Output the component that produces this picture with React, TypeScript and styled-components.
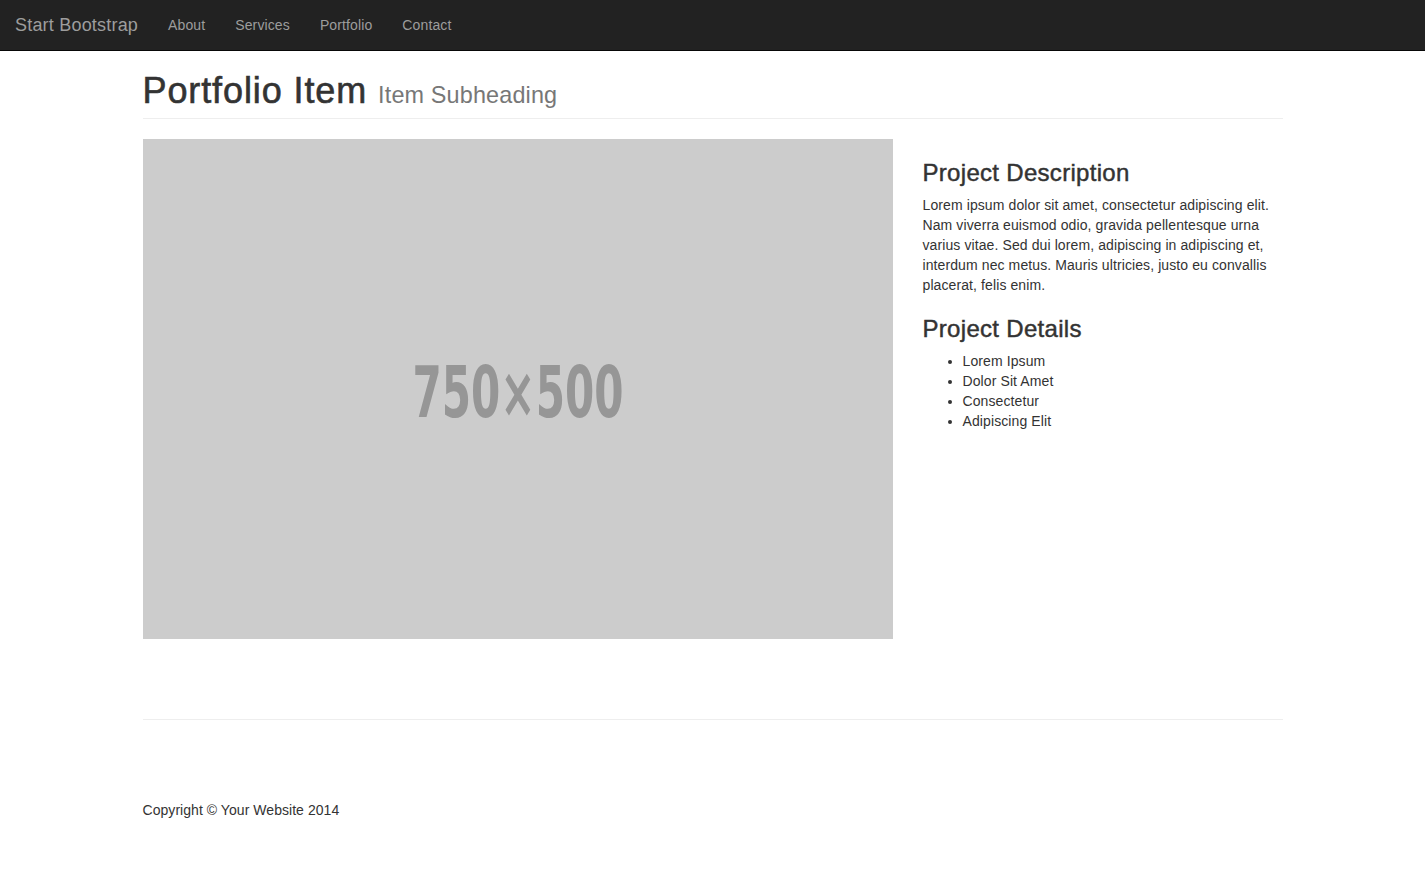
import React from "react";
import styled, { createGlobalStyle } from "styled-components";

const GlobalStyle = createGlobalStyle`
  html, body {
    margin: 0;
    padding: 0;
    background: #fff;
  }
  body {
    font-family: "Liberation Sans", Helvetica, Arial, sans-serif;
    font-size: 14px;
    line-height: 1.42857;
    color: #333;
  }
  * { box-sizing: border-box; }
`;

const Navbar = styled.nav`
  height: 51px;
  background: #222;
  border-bottom: 1px solid #080808;
  display: flex;
  align-items: center;
`;

const Brand = styled.a`
  padding: 15px;
  font-size: 18px;
  line-height: 20px;
  color: #9d9d9d;
  text-decoration: none;
  letter-spacing: 0.2px;
`;

const NavList = styled.ul`
  display: flex;
  list-style: none;
  margin: 0;
  padding: 0;
`;

const NavLink = styled.a`
  display: block;
  padding: 15px;
  font-size: 14px;
  line-height: 20px;
  color: #9d9d9d;
  text-decoration: none;
  letter-spacing: 0.12px;
`;

const Container = styled.div`
  width: 1140px;
  margin: 0 auto;
`;

const PageHeader = styled.h1`
  margin: 20px 0 20px;
  padding-bottom: 7px;
  border-bottom: 1px solid #eee;
  font-size: 36px;
  line-height: 1.1;
  font-weight: 500;
  color: #333;
  letter-spacing: 0.9px;
`;

const Title = styled.span`
  -webkit-text-stroke: 0.6px #333;
`;

const Sub = styled.small`
  font-size: 65%;
  font-weight: 400;
  line-height: 1;
  color: #777;
  letter-spacing: 0.15px;
`;

const Row = styled.div`
  display: flex;
  gap: 30px;
  align-items: flex-start;
`;

const ImageCol = styled.div`
  width: 750px;
  flex: none;
`;

const Placeholder = styled.svg`
  display: block;
  width: 750px;
  height: 500px;
`;

const SideCol = styled.div`
  width: 360px;
  flex: none;
  padding-top: 1px;
`;

const H3 = styled.h3`
  font-size: 24px;
  line-height: 1.1;
  font-weight: 500;
  margin: 20px 0 10px;
  color: #333;
  letter-spacing: 0.3px;
  -webkit-text-stroke: 0.45px #333;
`;

const Para = styled.p`
  margin: 0 0 10px;
  letter-spacing: 0.1px;
`;

const List = styled.ul`
  margin: 0 0 10px;
  padding-left: 40px;
  letter-spacing: 0.1px;
`;

const Rule = styled.hr`
  margin: 80px 0 0;
  border: 0;
  border-top: 1px solid #eee;
`;

const Footer = styled.footer`
  padding: 81px 0 50px;
`;

const Copy = styled.p`
  margin: 0;
  letter-spacing: 0.05px;
`;

export default function App() {
  return (
    <>
      <GlobalStyle />
      <Navbar>
        <Brand href="#">Start Bootstrap</Brand>
        <NavList>
          {["About", "Services", "Portfolio", "Contact"].map((l) => (
            <li key={l}>
              <NavLink href="#">{l}</NavLink>
            </li>
          ))}
        </NavList>
      </Navbar>
      <Container>
        <PageHeader>
          <Title>Portfolio Item</Title> <Sub>Item Subheading</Sub>
        </PageHeader>
        <Row>
          <ImageCol>
            <Placeholder viewBox="0 0 750 500">
              <rect width="750" height="500" fill="#ccc" />
              <text
                x="375"
                y="278"
                textAnchor="middle"
                fontFamily="'Liberation Sans Narrow', 'DejaVu Sans', Arial, sans-serif"
                fontStretch="condensed"
                fontWeight="bold"
                fontSize="72"
                fill="#969696"
                textLength="211"
                lengthAdjust="spacingAndGlyphs"
              >
                750×500
              </text>
            </Placeholder>
          </ImageCol>
          <SideCol>
            <H3>Project Description</H3>
            <Para>
              Lorem ipsum dolor sit amet, consectetur adipiscing elit. Nam viverra euismod odio,
              gravida pellentesque urna varius vitae. Sed dui lorem, adipiscing in adipiscing et,
              interdum nec metus. Mauris ultricies, justo eu convallis placerat, felis enim.
            </Para>
            <H3>Project Details</H3>
            <List>
              <li>Lorem Ipsum</li>
              <li>Dolor Sit Amet</li>
              <li>Consectetur</li>
              <li>Adipiscing Elit</li>
            </List>
          </SideCol>
        </Row>
        <Rule />
        <Footer>
          <Copy>Copyright © Your Website 2014</Copy>
        </Footer>
      </Container>
    </>
  );
}
